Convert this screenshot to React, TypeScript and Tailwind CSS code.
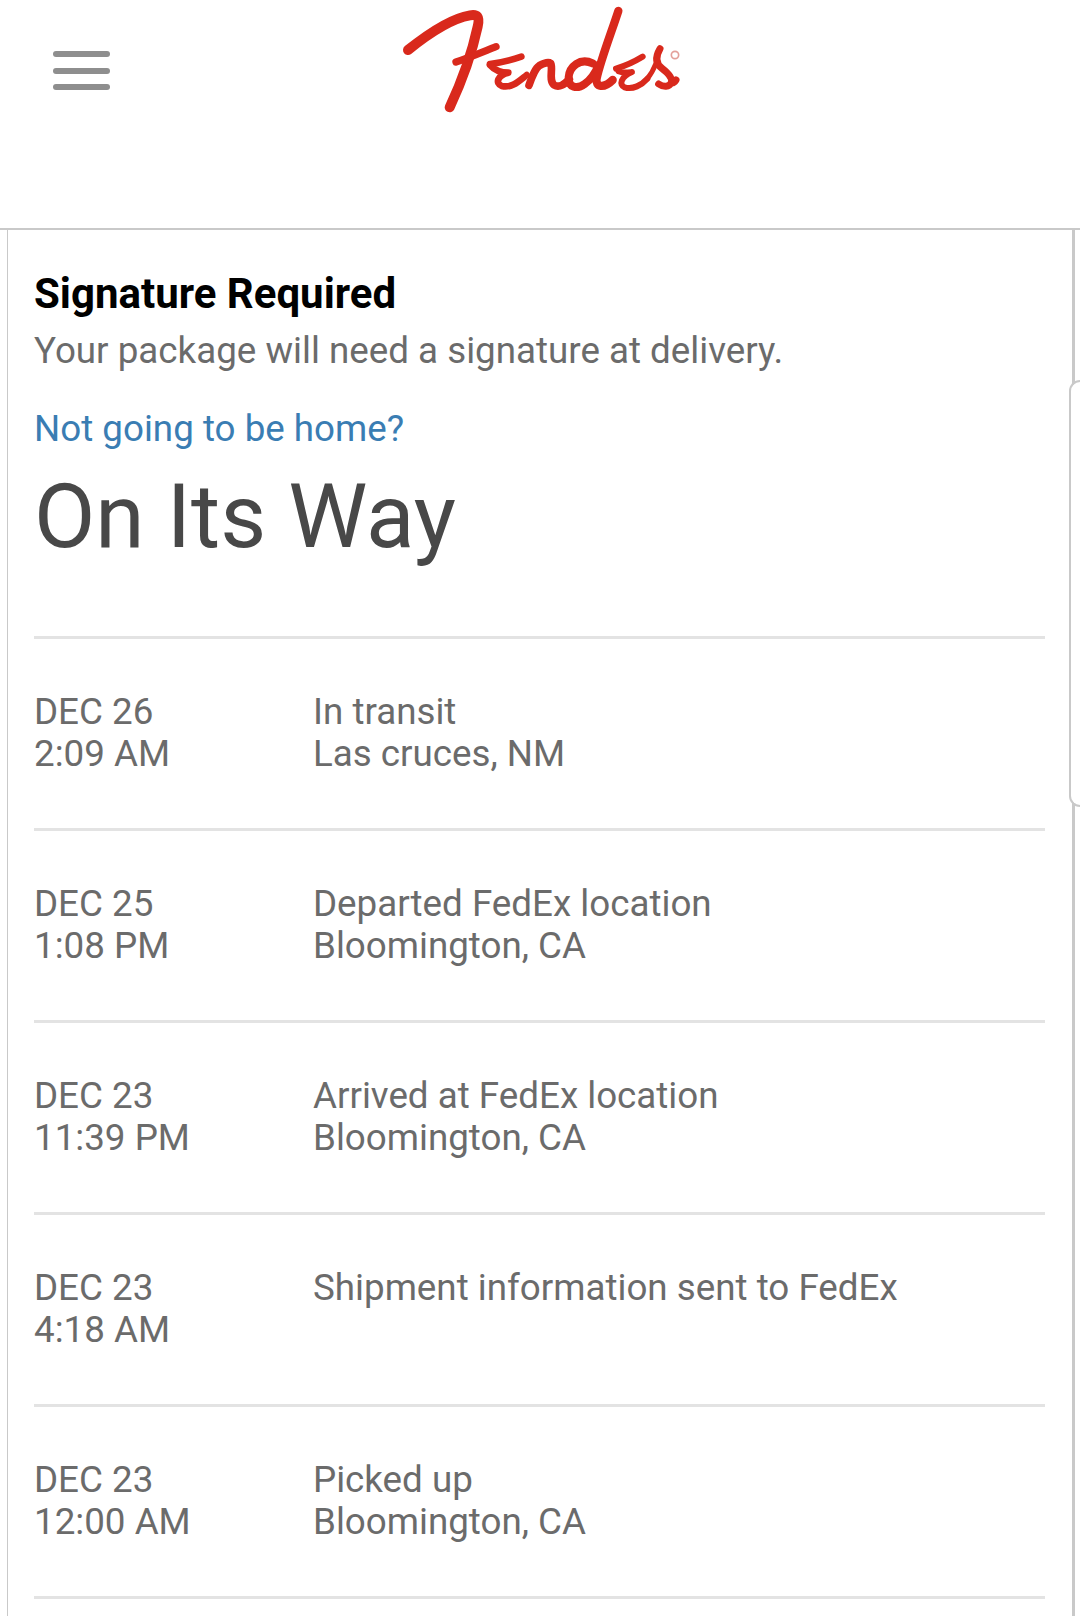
const rows = [
  { d: "DEC 26", t: "2:09 AM", a: "In transit", b: "Las cruces, NM" },
  { d: "DEC 25", t: "1:08 PM", a: "Departed FedEx location", b: "Bloomington, CA" },
  { d: "DEC 23", t: "11:39 PM", a: "Arrived at FedEx location", b: "Bloomington, CA" },
  { d: "DEC 23", t: "4:18 AM", a: "Shipment information sent to FedEx", b: "" },
  { d: "DEC 23", t: "12:00 AM", a: "Picked up", b: "Bloomington, CA" },
];

function Logo() {
  return (
    <svg viewBox="0 0 960 375" className="w-[320px] h-[125px]" fill="none" stroke="#d9291c" strokeLinecap="round" strokeLinejoin="round">
      <path d="M84 150 C140 105 215 55 270 46 C292 42 300 50 293 80 C278 150 245 245 209 322" strokeWidth="30" />
      <path d="M228 186 C270 172 310 155 348 140" strokeWidth="22" />
      <path d="M330 192 C365 188 395 180 424 170" strokeWidth="20" />
      <path d="M330 195 C345 212 360 218 385 218 C352 226 345 250 365 258 C395 265 415 245 440 225" strokeWidth="20" />
      <path d="M447 256 C458 225 466 205 478 197 C490 190 505 185 512 190 C520 205 505 240 522 255 C540 265 555 250 568 238" strokeWidth="23" />
      <path d="M638 190 C600 172 568 200 566 232 C564 264 592 268 614 252 C634 238 648 215 656 195" strokeWidth="24" />
      <path d="M715 33 C695 95 662 180 650 235 C645 262 672 266 698 240" strokeWidth="25" />
      <path d="M708 206 C735 198 765 184 788 170" strokeWidth="18" />
      <path d="M716 214 C728 220 740 218 756 216 C722 230 716 255 734 262 C758 270 785 255 802 236" strokeWidth="18" />
      <path d="M802 236 C815 220 822 205 828 190" strokeWidth="15" />
      <path d="M840 146 C826 170 826 190 846 205 C868 222 878 236 874 248 C868 262 850 262 836 252 M874 248 C880 250 884 246 888 240" strokeWidth="21" />
      <circle cx="885" cy="165" r="11" stroke="#e3a09a" strokeWidth="5" />
    </svg>
  );
}

export default function App() {
  return (
    <div className="relative w-[1080px] h-[1616px] overflow-hidden bg-white font-['Roboto',sans-serif] text-[#6b6b6b]">
      <header className="relative h-[230px] border-b-2 border-[#c9c9c9]">
        <div className="absolute left-[53px] top-[51px] flex w-[57px] flex-col gap-[10.5px]">
          <span className="h-[6px] rounded-full bg-[#8e8e8e]" />
          <span className="h-[6px] rounded-full bg-[#8e8e8e]" />
          <span className="h-[6px] rounded-full bg-[#8e8e8e]" />
        </div>
        <div className="absolute left-[380px] top-0">
          <Logo />
        </div>
      </header>
      <main className="ml-[7px] mr-[5px] h-[1386px] border-l border-r-[3px] border-l-[#c9c9c9] border-r-[#c9c9c9] pl-[26px] pr-[27px]">
        <h2 className="pt-[40px] text-[42px] leading-[48px] font-bold text-black">Signature Required</h2>
        <p className="mt-[9px] text-[36.75px] leading-[48px]">Your package will need a signature at delivery.</p>
        <p className="mt-[30px] text-[36.75px] leading-[48px] text-[#3a7db3]">Not going to be home?</p>
        <h1 className="mt-[14px] text-[89.2px] leading-[100px] text-[#484848]">On Its Way</h1>
        <div className="mt-[69px]">
          {rows.map((r, i) => (
            <div key={i} className="flex h-[192px] border-t-[3px] border-[#e3e3e3] pt-[52px] text-[36.75px] leading-[42px]">
              <div className="w-[279px]">
                <div>{r.d}</div>
                <div>{r.t}</div>
              </div>
              <div>
                <div>{r.a}</div>
                <div>{r.b}</div>
              </div>
            </div>
          ))}
          <div className="border-t-[3px] border-[#e3e3e3]" />
        </div>
      </main>
      <div className="absolute right-0 top-[380px] h-[427px] w-[11px] rounded-l-[14px] border-2 border-r-0 border-[#c9c9c9] bg-white" />
    </div>
  );
}
